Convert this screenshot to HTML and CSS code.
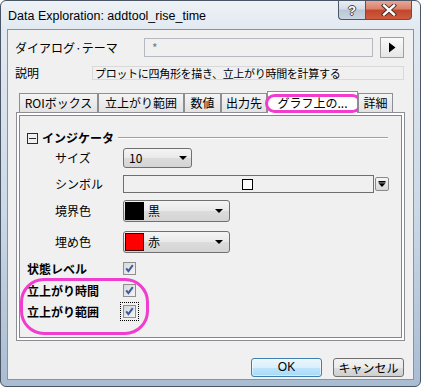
FILE: index.html
```html
<!DOCTYPE html>
<html lang="ja">
<head>
<meta charset="utf-8">
<title>Data Exploration</title>
<link rel="stylesheet" href="styles.css">
</head>
<body>
<div class="window">
  <div class="titlebar">
    <span class="title">Data Exploration: addtool_rise_time</span>
    <div class="caption-buttons">
      <div class="cap-btn help">?</div>
      <div class="cap-btn close">
        <svg width="16" height="12" viewBox="0 0 16 12"><path d="M3 1.5 L13 10.5 M13 1.5 L3 10.5" stroke="#3b2a26" stroke-width="4.2" stroke-linecap="square"/><path d="M3 1.5 L13 10.5 M13 1.5 L3 10.5" stroke="#fff" stroke-width="2.4" stroke-linecap="square"/></svg>
      </div>
    </div>
  </div>
  <div class="client">
    <div class="theme-row">
      <span class="theme-label">ダイアログ·テーマ</span>
      <div class="theme-input">*</div>
      <div class="arrow-btn">
        <svg width="8" height="11" viewBox="0 0 8 11"><path d="M1 0.5 L7.5 5.5 L1 10.5 Z" fill="#000"/></svg>
      </div>
    </div>
    <div class="desc-row">
      <span class="desc-label">説明</span>
      <div class="desc-box">プロットに四角形を描き、立上がり時間を計算する</div>
    </div>
    <div class="tabs">
      <div class="tab tab-roi">ROIボックス</div>
      <div class="tab tab-range">立上がり範囲</div>
      <div class="tab tab-num">数値</div>
      <div class="tab tab-out">出力先</div>
      <div class="tab tab-graph selected">グラフ上の...<span class="hl-tab"></span></div>
      <div class="tab tab-detail">詳細</div>
    </div>
    <div class="panel">
      <div class="inner">
        <div class="group-head">
          <span class="collapse-icon"></span>
          <span class="group-title">インジケータ</span>
          <span class="group-line"></span>
        </div>
        <div class="prop-row row-size">
          <span class="prop-label">サイズ</span>
          <div class="combo combo-size"><span class="combo-text">10</span><span class="combo-arrow"></span></div>
        </div>
        <div class="prop-row row-symbol">
          <span class="prop-label">シンボル</span>
          <div class="symbol-box"><span class="symbol-square"></span></div>
          <div class="mini-btn">
            <svg width="12" height="12" viewBox="0 0 12 12"><rect x="2.5" y="3" width="7" height="1.6" fill="#000"/><path d="M2.5 5.2 L9.5 5.2 L6 9 Z" fill="#000"/></svg>
          </div>
        </div>
        <div class="prop-row row-border">
          <span class="prop-label">境界色</span>
          <div class="combo combo-color"><span class="swatch swatch-black"></span><span class="combo-text">黒</span><span class="combo-arrow"></span></div>
        </div>
        <div class="prop-row row-fill">
          <span class="prop-label">埋め色</span>
          <div class="combo combo-color"><span class="swatch swatch-red"></span><span class="combo-text">赤</span><span class="combo-arrow"></span></div>
        </div>
        <div class="check-row row-state">
          <span class="check-label">状態レベル</span>
          <span class="checkbox"><svg width="13" height="13" viewBox="0 0 13 13"><path d="M3.2 6.4 L5.4 9.2 L9.8 3.2" fill="none" stroke="#3d5a9e" stroke-width="2"/></svg></span>
        </div>
        <div class="hl-group">
          <div class="check-row row-rise">
            <span class="check-label">立上がり時間</span>
            <span class="checkbox"><svg width="13" height="13" viewBox="0 0 13 13"><path d="M3.2 6.4 L5.4 9.2 L9.8 3.2" fill="none" stroke="#3d5a9e" stroke-width="2"/></svg></span>
          </div>
          <div class="check-row row-riserange">
            <span class="check-label">立上がり範囲</span>
            <span class="checkbox focused"><svg width="13" height="13" viewBox="0 0 13 13"><path d="M3.2 6.4 L5.4 9.2 L9.8 3.2" fill="none" stroke="#3d5a9e" stroke-width="2"/></svg></span>
          </div>
          <span class="hl-box"></span>
        </div>
      </div>
    </div>
    <div class="buttons">
      <div class="btn btn-ok">OK</div>
      <div class="btn">キャンセル</div>
    </div>
  </div>
</div>
</body>
</html>
```
FILE: styles.css
```css
* { box-sizing: border-box; }
html, body { margin: 0; padding: 0; }
body {
  width: 421px;
  height: 387px;
  overflow: hidden;
  background: #ffffff;
  font-family: "Noto Sans CJK JP", "Liberation Sans", sans-serif;
  font-size: 12px;
  color: #000;
}
.window {
  width: 421px;
  height: 387px;
  display: flex;
  flex-direction: column;
  border: 1px solid #4a5666;
  border-radius: 6px;
  background: linear-gradient(to bottom, #eef2f6 0, #e2e9f1 28px, #cbd8e6 55%, #a9bcd2 100%);
}
.titlebar {
  height: 28px;
  display: flex;
  align-items: flex-start;
  padding-left: 7px;
  padding-right: 8px;
}
.title {
  font-family: "Liberation Sans", sans-serif;
  font-size: 12.5px;
  line-height: 14px;
  margin-top: 8px;
  color: #000;
}
.caption-buttons {
  margin-left: auto;
  display: flex;
  height: 19px;
}
.cap-btn {
  height: 19px;
  border: 1px solid #4b5868;
  border-top: none;
  display: flex;
  align-items: center;
  justify-content: center;
}
.help {
  width: 27px;
  border-right: none;
  border-radius: 0 0 0 4px;
  background: linear-gradient(to bottom, #e9eef4 0, #d3dce7 45%, #b9c6d5 50%, #c9d5e2 100%);
  color: #fff;
  font-family: "Liberation Sans", sans-serif;
  font-weight: bold;
  font-size: 13px;
  text-shadow: 1px 0 0 #3c4655, -1px 0 0 #3c4655, 0 1px 0 #3c4655, 0 -1px 0 #3c4655;
}
.close {
  width: 47px;
  border-radius: 0 0 4px 0;
  background: linear-gradient(to bottom, #e8a797 0, #d9806a 45%, #c2462c 50%, #cf5a3c 100%);
}
.client {
  flex: 1;
  margin: 0 6px 6px 6px;
  border: 1px solid #8593a5;
  background: #f0f0f0;
  display: flex;
  flex-direction: column;
}
.theme-row {
  display: flex;
  align-items: center;
  height: 21px;
  margin-top: 7px;
}
.theme-label {
  width: 136px;
  padding-left: 7px;
  line-height: 14px;
}
.theme-input {
  width: 229px;
  height: 19px;
  border: 1px solid #b5b8be;
  background: #f0f0f0;
  color: #7a7a7a;
  padding-left: 7px;
  line-height: 17px;
}
.arrow-btn {
  width: 24px;
  height: 21px;
  margin-left: 7px;
  border: 1px solid #a0a0a0;
  background: linear-gradient(to bottom, #fafafa, #e6e6e6);
  display: flex;
  align-items: center;
  justify-content: center;
}
.desc-row {
  display: flex;
  align-items: center;
  margin-top: 8px;
  height: 14px;
}
.desc-label {
  width: 84px;
  padding-left: 7px;
  line-height: 14px;
}
.desc-box {
  width: 312px;
  height: 14px;
  border: 1px solid #d9d9d9;
  background: #f0f0f0;
  padding-left: 2px;
  font-size: 11px;
  letter-spacing: -0.3px;
  line-height: 12px;
  white-space: nowrap;
}
.tabs {
  display: flex;
  align-items: flex-end;
  height: 21px;
  margin-top: 11px;
  padding-left: 11px;
  position: relative;
  z-index: 1;
}
.tab {
  height: 19px;
  border: 1px solid #8c8e94;
  border-bottom: none;
  background: linear-gradient(to bottom, #f4f4f4, #e2e2e2);
  text-align: center;
  line-height: 17px;
  white-space: nowrap;
  position: relative;
}
.tab-roi { width: 79px; }
.tab-range { width: 86px; }
.tab-num { width: 37px; }
.tab-out { width: 46px; }
.tab-graph { width: 91px; }
.tab-detail { width: 35px; }
.tab.selected {
  height: 22px;
  margin-bottom: -1px;
  background: #ffffff;
  line-height: 22px;
}
.hl-tab {
  position: absolute;
  left: -3px;
  top: 2px;
  width: 97px;
  height: 19px;
  border: 3px solid #f03ccf;
  border-radius: 10px;
}
.panel {
  margin: 0 8px;
  height: 229px;
  border: 1px solid #8c8e94;
  background: #ffffff;
  padding: 2px;
}
.inner {
  height: 100%;
  border: 1px solid #82868e;
  background: #f0f0f0;
  position: relative;
}
.group-head {
  display: flex;
  align-items: center;
  height: 16px;
  margin-top: 14px;
  padding-left: 7px;
}
.collapse-icon {
  width: 11px;
  height: 11px;
  border: 1px solid #2a2a2a;
  position: relative;
}
.collapse-icon::after {
  content: "";
  position: absolute;
  left: 1px;
  right: 1px;
  top: 4px;
  height: 1px;
  background: #2a2a2a;
}
.group-title {
  margin-left: 4px;
  font-weight: bold;
  line-height: 16px;
}
.group-line {
  flex: 1;
  height: 2px;
  margin: 0 13px 0 4px;
  border-top: 1px solid #a0a0a0;
  border-bottom: 1px solid #ffffff;
}
.prop-row {
  display: flex;
  align-items: center;
}
.prop-label {
  width: 103px;
  padding-left: 35px;
  line-height: 14px;
}
.row-size { height: 20px; margin-top: 2px; }
.row-symbol { height: 18px; margin-top: 7px; }
.row-border { height: 22px; margin-top: 7px; }
.row-fill { height: 22px; margin-top: 9px; }
.combo {
  display: flex;
  align-items: center;
  border: 1px solid #707070;
  border-radius: 3px;
  background: linear-gradient(to bottom, #f4f4f4 0, #e9e9e9 50%, #dcdcdc 51%, #d4d4d4 100%);
  position: relative;
}
.combo-size {
  width: 69px;
  height: 20px;
  padding-left: 5px;
}
.combo-color {
  width: 107px;
  height: 22px;
  padding-left: 1px;
}
.combo-text { line-height: 16px; }
.combo-arrow {
  margin-left: auto;
  margin-right: 4px;
  width: 0;
  height: 0;
  border-left: 4px solid transparent;
  border-right: 4px solid transparent;
  border-top: 4px solid #000;
}
.combo-color .combo-arrow { margin-right: 6px; }
.swatch {
  width: 19px;
  height: 18px;
  margin-right: 4px;
}
.swatch-black { background: #000; }
.swatch-red { background: #ff0000; border: 1px solid #3a0000; }
.symbol-box {
  width: 251px;
  height: 18px;
  border: 1px solid #6f6f6f;
  background: #f0f0f0;
  display: flex;
  align-items: center;
  justify-content: center;
}
.symbol-square {
  width: 11px;
  height: 11px;
  border: 1px solid #000;
  background: #fff;
  margin-right: 2px;
}
.mini-btn {
  width: 14px;
  height: 14px;
  margin-left: 1px;
  border: 1px solid #8a8a8a;
  border-radius: 2px;
  background: linear-gradient(to bottom, #f6f6f6, #d8d8d8);
  display: flex;
  align-items: center;
  justify-content: center;
}
.check-row {
  display: flex;
  align-items: center;
  height: 13px;
}
.check-label {
  width: 103px;
  padding-left: 7px;
  font-weight: bold;
  line-height: 14px;
}
.checkbox {
  width: 13px;
  height: 13px;
  border: 1px solid #8e8f8f;
  background: linear-gradient(135deg, #d6d8db, #f4f4f4);
  display: flex;
  align-items: center;
  justify-content: center;
  position: relative;
}
.checkbox svg { position: absolute; left: -1px; top: -1px; }
.checkbox.focused { outline: 1px dotted #000; outline-offset: 2px; }
.row-state { margin-top: 9px; }
.hl-group { position: relative; padding-top: 9px; }
.row-riserange { margin-top: 8px; }
.hl-box {
  position: absolute;
  left: 0;
  top: 3px;
  width: 129px;
  height: 57px;
  border: 3px solid #f03ccf;
  border-radius: 24px;
}
.buttons {
  display: flex;
  justify-content: flex-end;
  gap: 11px;
  margin-top: 17px;
  padding-right: 9px;
}
.btn {
  width: 71px;
  height: 19px;
  border: 1px solid #707070;
  border-radius: 3px;
  background: linear-gradient(to bottom, #f2f2f2 0, #ebebeb 50%, #dddddd 51%, #cfcfcf 100%);
  text-align: center;
  line-height: 17px;
}
.btn-ok {
  border-color: #3c7fb1;
  background: linear-gradient(to bottom, #eaf6fd 0, #d9f0fc 50%, #bee6fd 51%, #a7d9f5 100%);
  box-shadow: inset 0 0 0 1px rgba(255,255,255,0.5);
  font-family: "Liberation Sans", sans-serif;
}
```
